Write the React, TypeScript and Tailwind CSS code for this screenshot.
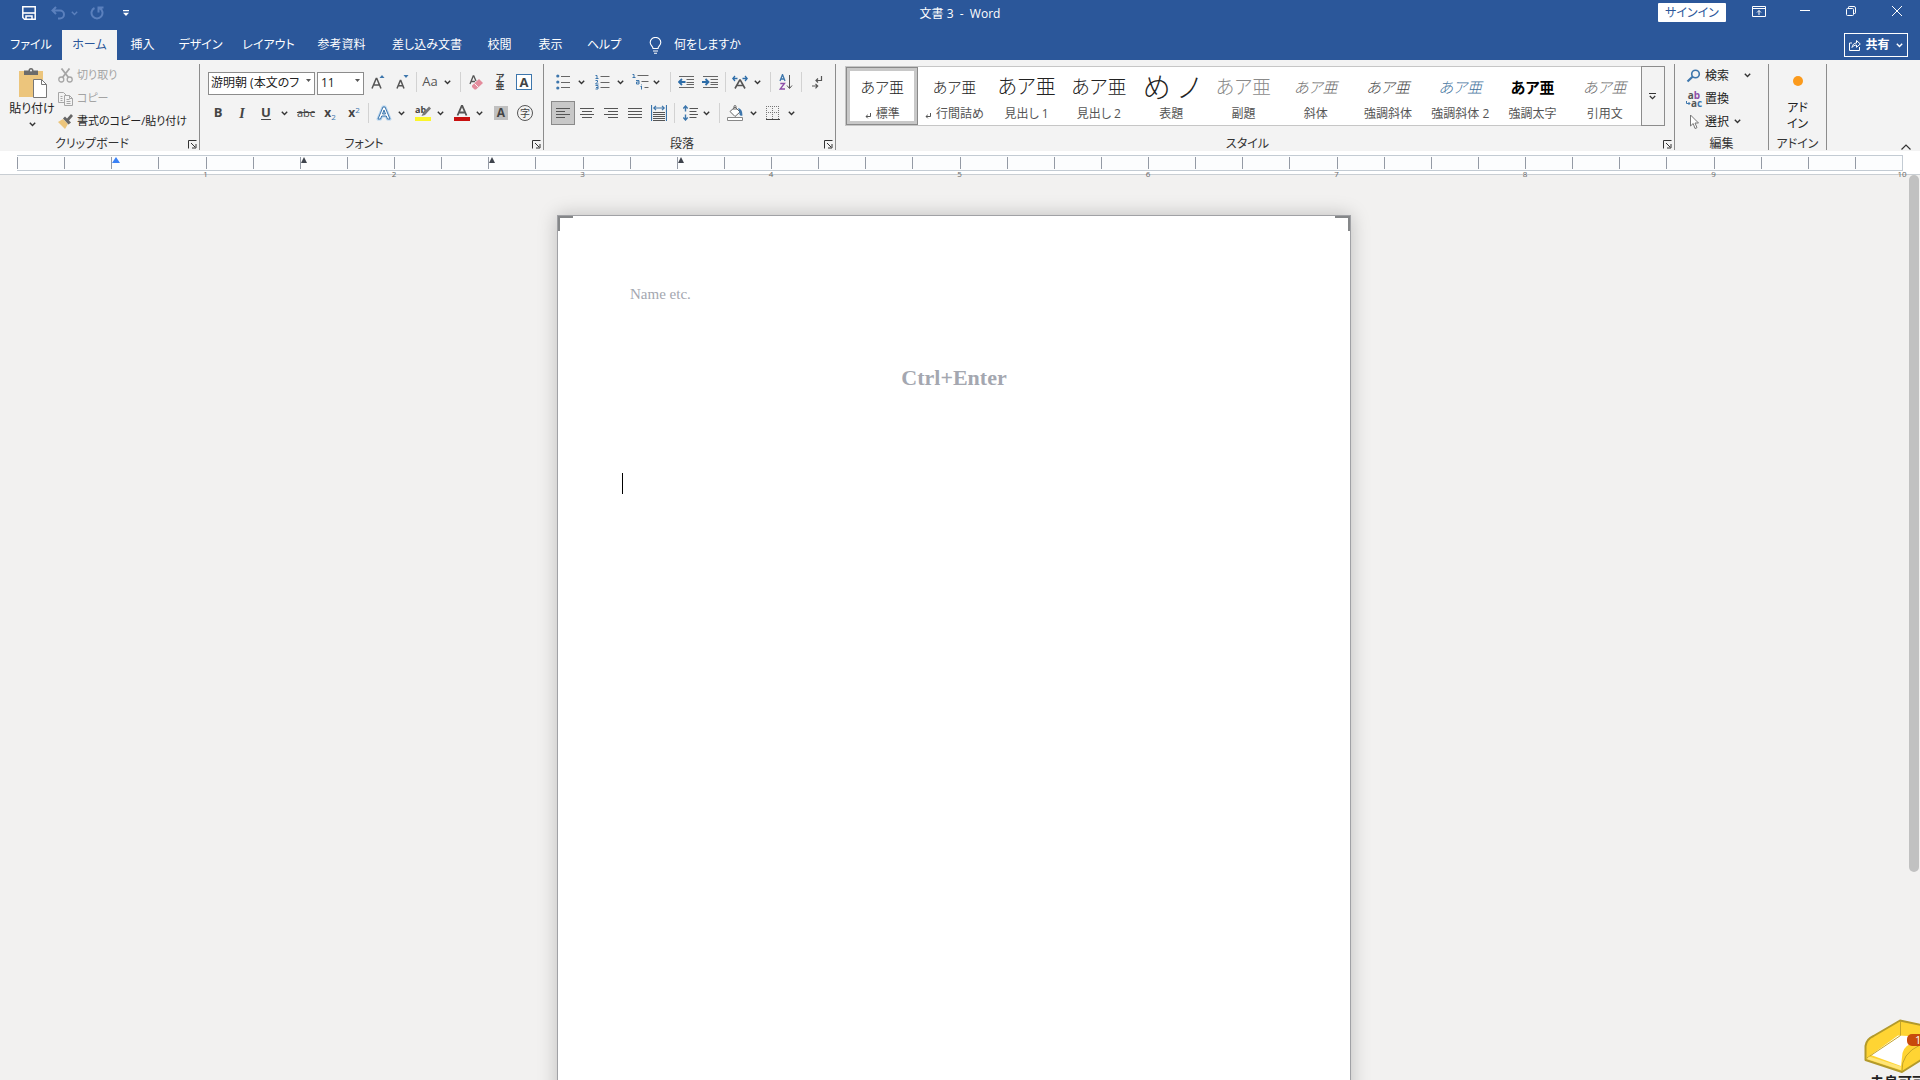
import type { ReactNode } from 'react';
import clsx from 'clsx';

const tabs = [
  { label: 'ファイル', width: 'w-[62px]' },
  { label: 'ホーム', width: 'w-[55px]', active: true },
  { label: '挿入', width: 'w-[51px]' },
  { label: 'デザイン', width: 'w-[65px]' },
  { label: 'レイアウト', width: 'w-[71px]' },
  { label: '参考資料', width: 'w-[75px]' },
  { label: '差し込み文書', width: 'w-[96px]' },
  { label: '校閲', width: 'w-[49px]' },
  { label: '表示', width: 'w-[53px]' },
  { label: 'ヘルプ', width: 'w-[54px]' },
];

const styles = [
  { label: '標準', sample: 'あア亜', look: 'text-[15px] font-light text-[#222]', mark: true, active: true },
  { label: '行間詰め', sample: 'あア亜', look: 'text-[15px] font-light text-[#222]', mark: true },
  { label: '見出し 1', sample: 'あア亜', look: 'text-[20px] font-light text-[#222]' },
  { label: '見出し 2', sample: 'あア亜', look: 'text-[19px] font-light text-[#222]' },
  { label: '表題', sample: 'め ノ', look: 'text-[28px] font-light text-[#222]' },
  { label: '副題', sample: 'あア亜', look: 'text-[19px] font-light text-[#8a8a8a]' },
  { label: '斜体', sample: 'あア亜', look: 'text-[15px] font-light italic text-[#6a6a6a]' },
  { label: '強調斜体', sample: 'あア亜', look: 'text-[15px] font-light italic text-[#444]' },
  { label: '強調斜体 2', sample: 'あア亜', look: 'text-[15px] font-light italic text-[#41719c]' },
  { label: '強調太字', sample: 'あア亜', look: 'text-[15px] font-bold text-black' },
  { label: '引用文', sample: 'あア亜', look: 'text-[15px] font-light italic text-[#6a6a6a]' },
];

function Chevron({ className = 'text-[#333]' }: { className?: string }) {
  return (
    <svg viewBox="0 0 7 5" className={clsx('h-[5px] w-[7px] shrink-0', className)} fill="none" stroke="currentColor" strokeWidth="1.4">
      <path d="M0.8 0.8 3.5 3.5 6.2 0.8" />
    </svg>
  );
}

function Tool({ label, className = 'w-6', active, children }: { label: string; className?: string; active?: boolean; children: ReactNode }) {
  return (
    <button
      aria-label={label}
      className={clsx('flex h-6 shrink-0 items-center justify-center', className, active && 'border border-[#8a8a8a] bg-[#c8c8c8]')}
    >
      {children}
    </button>
  );
}

function Drop({ label }: { label: string }) {
  return (
    <button aria-label={label} className="flex h-6 w-3 shrink-0 items-center justify-center">
      <Chevron />
    </button>
  );
}

function Sep({ className }: { className: string }) {
  return <div className={clsx('h-5 w-px shrink-0 bg-[#d2d2d2]', className)} />;
}

function Group({ label, launcher, className, children }: { label: string; launcher?: boolean; className: string; children: ReactNode }) {
  return (
    <section className={clsx('flex flex-col border-r border-[#8c8c8c]', className)}>
      <div className="h-[74px]">{children}</div>
      <div className="flex h-3 items-center">
        <h2 className="flex-1 text-center text-[12px] leading-3 whitespace-nowrap text-[#333]">{label}</h2>
        {launcher && (
          <button aria-label={`${label}の設定`} className="mr-[2px] ml-1">
            <svg viewBox="0 0 9 9" className="size-[9px]" fill="none" stroke="#333">
              <path d="M0.5 8.5V0.5H8.5M3 3l4 4M8 4v4H4" />
            </svg>
          </button>
        )}
      </div>
    </section>
  );
}

function LineIcon({ rows }: { rows: [number, number][] }) {
  return (
    <svg viewBox="0 0 16 14" className="h-[14px] w-4" stroke="#555">
      {rows.map(([x1, x2], i) => (
        <path key={i} d={`M${x1} ${i * 3 + 2.5}H${x2}`} />
      ))}
    </svg>
  );
}

function ListIcon({ kind }: { kind: 'bullet' | 'number' | 'multi' }) {
  if (kind === 'bullet') {
    return (
      <svg viewBox="0 0 14 16" className="h-4 w-[14px]" fill="#3d76ac">
        <circle cx="1.8" cy="2" r="1.6" />
        <circle cx="1.8" cy="8" r="1.6" />
        <circle cx="1.8" cy="14" r="1.6" />
        <path d="M5 2.5h9M5 8.5h9M5 13.5h9" stroke="#666" />
      </svg>
    );
  }
  if (kind === 'number') {
    return (
      <svg viewBox="0 0 15 16" className="h-4 w-[15px]" fill="none" stroke="#3d76ac">
        <path d="M0.5 1.5h1.5v3M0.5 4.5h3M0.5 6.5h2v1.5l-2 2h3M0.5 11.5h2.5v3.5h-2.5M1 13.5h2" />
        <path d="M5.5 2.5h9M5.5 8.5h9M5.5 13.5h9" stroke="#666" />
      </svg>
    );
  }
  return (
    <svg viewBox="0 0 17 16" className="h-4 w-[17px]" fill="none" stroke="#3d76ac">
      <path d="M0.5 0.5h1.5v3M0.5 3.5h3M4 6.5h3v3.5h-2.5v-2h2.5M9.5 10.5v.8M9.5 12v3.5M8.5 12.5h1" />
      <path d="M5.5 1.5h11M9.5 7.5h7M12.5 13.5h4" stroke="#666" />
    </svg>
  );
}

function IndentIcon({ out }: { out?: boolean }) {
  return (
    <svg viewBox="0 0 16 14" className="h-[14px] w-4" fill="none">
      <path d="M1 1.5h15M8.5 4.5H16M8.5 7.5H16M8.5 9.5H16M1 12.5h15" stroke="#666" />
      {out ? <path d="M7.5 7H1M4 4 1 7l3 3" stroke="#2e6da8" strokeWidth="1.8" /> : <path d="M0 7h6.5M3.5 4l3 3-3 3" stroke="#2e6da8" strokeWidth="1.8" />}
    </svg>
  );
}

function TitleBar() {
  return (
    <header className="grid h-[30px] grid-cols-[1fr_auto_1fr] bg-[#2b579a] text-white">
      <div className="flex h-[26px] items-center pl-[22px]">
        <button aria-label="上書き保存">
          <svg viewBox="0 0 14 14" className="size-[14px]" fill="none" stroke="#fff" strokeWidth="1.5">
            <path d="M0.8 0.8h12.4v12.4H2.5L0.8 11.5z" />
            <path d="M1 7h12" strokeWidth="1.6" />
            <path d="M4 13V10h6v3" />
          </svg>
        </button>
        <button aria-label="元に戻す" className="ml-[15px]">
          <svg viewBox="0 0 14 14" className="size-[14px]" fill="none" stroke="#5b80bd" strokeWidth="2">
            <path d="M5 1 1.500 4.500 5 8M1.500 4.500H9a4 4 0 0 1 0 8H7" />
          </svg>
        </button>
        <button aria-label="元に戻すの履歴" className="ml-[6px]">
          <Chevron className="text-[#5b80bd]" />
        </button>
        <button aria-label="繰り返し" className="ml-[12px]">
          <svg viewBox="0 0 14 14" className="size-[14px]" fill="none" stroke="#5b80bd" strokeWidth="2">
            <path d="M4.500 2A5.500 5.500 0 1 0 9.500 2M8.500 6.500V1.500H13.500" />
          </svg>
        </button>
        <button aria-label="クイック アクセス ツール バーのカスタマイズ" className="ml-[19px]">
          <svg viewBox="0 0 6 6" className="size-[6px]" fill="#fff">
            <path d="M0 0h6v1.300H0zM0 2.700h6L3 6z" />
          </svg>
        </button>
      </div>
      <h1 className="flex h-[28px] items-center text-[12px] whitespace-pre">{'文書 3  -  Word'}</h1>
      <div className="flex h-[22px] justify-end">
        <button className="mt-[3px] mr-[10px] h-[19px] w-[68px] rounded-[1px] bg-white text-[12px] leading-[19px] text-[#2b579a]">サインイン</button>
        <button aria-label="リボンの表示オプション" className="flex w-[46px] items-center justify-center">
          <svg viewBox="0 0 14 11" className="h-[11px] w-[14px]" fill="none" stroke="#fff">
            <path d="M0.500 0.500h13v10H0.500zM0.500 2.500h13M7 9V4.500M5 6.500l2-2 2 2" />
          </svg>
        </button>
        <button aria-label="最小化" className="flex w-[46px] items-center justify-center">
          <svg viewBox="0 0 10 10" className="size-[10px]" stroke="#fff">
            <path d="M0 4.500h10" />
          </svg>
        </button>
        <button aria-label="元のサイズに戻す" className="flex w-[46px] items-center justify-center">
          <svg viewBox="0 0 10 10" className="size-[10px]" fill="none" stroke="#fff">
            <rect x="0.5" y="2.5" width="7" height="7" rx="1" />
            <path d="M2.500 2V1.200q0-.7.700-.7H8q1.500 0 1.500 1.500v4.800q0 .7-.7.700H8" />
          </svg>
        </button>
        <button aria-label="閉じる" className="flex w-[46px] items-center justify-center">
          <svg viewBox="0 0 10 10" className="size-[10px]" stroke="#fff">
            <path d="M0 0l10 10M10 0 0 10" />
          </svg>
        </button>
      </div>
    </header>
  );
}

function TabBar() {
  return (
    <nav className="flex h-[30px] bg-[#2b579a] text-[12px] text-white">
      {tabs.map((tab) => (
        <button
          key={tab.label}
          className={clsx('shrink-0 text-center whitespace-nowrap', tab.width, tab.active && 'bg-[#f3f3f3] text-[#2b579a]')}
        >
          {tab.label}
        </button>
      ))}
      <button className="ml-[18px] flex items-center gap-3 whitespace-nowrap">
        <svg viewBox="0 0 13 17" className="h-[17px] w-[13px]" fill="none" stroke="#fff" strokeWidth="1.1">
          <path d="M4 11.500C4 9 1.200 8.500 1.200 5.500a5.200 5 0 0 1 10.600 0C11.800 8.500 9 9 9 11.500zM4 14h5M5 16.200h3" />
        </svg>
        何をしますか
      </button>
      <button className="mt-[3px] mr-[12px] ml-auto flex h-[24px] w-[64px] items-center justify-center border border-white font-bold">
        <svg viewBox="0 0 12 12" className="mr-1 size-3" fill="none" stroke="#fff">
          <path d="M3 4H0.500v7.500h10V8M3 8.500C3.500 5.500 5 4 7.500 4V1.500L11.300 5 7.500 8.300V6C5.500 6 4 7 3 8.500z" />
        </svg>
        共有
        <Chevron className="ml-[6px] text-white" />
      </button>
    </nav>
  );
}

function ClipboardGroup() {
  return (
    <Group label="クリップボード" launcher className="w-[200px]">
      <div className="flex pl-2">
        <button className="flex w-12 flex-col items-center pt-1 text-[12px] leading-4 text-[#222]">
          <svg viewBox="0 0 28 30" className="ml-[2px] h-[30px] w-7">
            <path d="M0 3h24v26H0z" fill="#ecc57c" />
            <path d="M5 2.500h4.500a2.500 2.500 0 0 1 5 0H19V7H5z" fill="#6b6b6b" />
            <circle cx="12" cy="2.5" r="1" fill="#f3f3f3" />
            <path d="M14.500 11.500h8l5 5v13h-13z" fill="#fff" stroke="#777" />
            <path d="M22.500 11.500v5h5" fill="none" stroke="#777" />
          </svg>
          <span className="mt-[3px] whitespace-nowrap">貼り付け</span>
          <Chevron className="mt-[5px] text-[#333]" />
        </button>
        <div className="flex flex-col pl-[2px] text-[11px] whitespace-nowrap">
          <button disabled className="flex h-[23px] items-center gap-1 text-[#a3a3a3]">
            <svg viewBox="0 0 15 15" className="size-[15px]" fill="none" stroke="#a6a6a6" strokeWidth="1.3">
              <path d="M3.500 0.500 10.500 9.500M11.500 0.500 4.500 9.500" strokeWidth="1.8" />
              <circle cx="3.3" cy="11.5" r="2.5" />
              <circle cx="11.7" cy="11.5" r="2.5" />
            </svg>
            切り取り
          </button>
          <button disabled className="flex h-[23px] items-center gap-1 text-[#a3a3a3]">
            <svg viewBox="0 0 15 15" className="size-[15px]" fill="#f3f3f3" stroke="#a6a6a6">
              <path d="M0.500 1.500h5l3 3v7h-8zM2.500 5.500h2M2.500 7.500h2M2.500 9.500h2" />
              <path d="M6.500 4.500h5l3 3v7h-8zM11.500 4.500v3h3M8.500 8.500h3M8.500 10.500h4M8.500 12.500h4" />
            </svg>
            コピー
          </button>
          <button className="flex h-[23px] items-center gap-1 text-[#222]">
            <svg viewBox="0 0 15 15" className="size-[15px]">
              <path d="M0 8 5 5l5 5-3 5z" fill="#ecc57c" />
              <path d="M5 4.500 7 2.500l2 2L13 0l2 2-4 4.500 2 2-2.500 2z" fill="#666" />
            </svg>
            書式のコピー/貼り付け
          </button>
        </div>
      </div>
    </Group>
  );
}

function FontGroup() {
  return (
    <Group label="フォント" launcher className="w-[344px]">
      <div className="flex h-[36px] items-center pl-2 text-[#555]">
        <div className="relative">
          <select aria-label="フォント" className="h-[23px] w-[107px] appearance-none border border-[#8c8c8c] bg-white pr-[14px] pl-[2px] text-[12px] text-[#222]">
            <option>游明朝 (本文のフォント)</option>
          </select>
          <svg viewBox="0 0 5 3" className="pointer-events-none absolute top-[10px] right-[4px] h-[3px] w-[5px]" fill="#555">
            <path d="M0 0h5L2.500 3z" />
          </svg>
        </div>
        <div className="relative ml-[2px]">
          <select aria-label="フォント サイズ" className="h-[23px] w-[47px] appearance-none border border-[#8c8c8c] bg-white pl-[3px] text-[12px] text-[#222]">
            <option>11</option>
          </select>
          <svg viewBox="0 0 5 3" className="pointer-events-none absolute top-[10px] right-[4px] h-[3px] w-[5px]" fill="#555">
            <path d="M0 0h5L2.500 3z" />
          </svg>
        </div>
        <Tool label="フォント サイズの拡大" className="ml-[2px] w-6">
          <svg viewBox="0 0 14 14" className="size-[14px]" fill="none" stroke="#555" strokeWidth="1.5">
            <path d="M1 13.500 5.200 3.500h.6L10 13.500M2.500 10h6" />
            <path d="M8.500 3 11 0l2.500 3z" fill="#3d76ac" stroke="none" />
          </svg>
        </Tool>
        <Tool label="フォント サイズの縮小">
          <svg viewBox="0 0 14 14" className="size-[14px]" fill="none" stroke="#555" strokeWidth="1.5">
            <path d="M2 13.500 5.300 5.500h.5L9 13.500M3.500 10.800h4.500" />
            <path d="M8.500 0h5L11 3z" fill="#3d76ac" stroke="none" />
          </svg>
        </Tool>
        <Sep className="mx-[2px]" />
        <Tool label="文字種の変換" className="w-[22px] text-[13px]">Aa</Tool>
        <Drop label="文字種の一覧" />
        <Sep className="mr-[3px] ml-[7px]" />
        <Tool label="書式のクリア">
          <svg viewBox="0 0 15 15" className="size-[15px]" fill="none">
            <path d="M1 9 4.200 1h.6L7 6M2 6.500h4" stroke="#555" strokeWidth="1.3" />
            <path d="M3 10.500 10 4l4 4-7 6.500H5.500L3 12z" fill="#e48c9c" />
            <path d="M5.500 8.500 9.500 12.500" stroke="#f3f3f3" />
          </svg>
        </Tool>
        <Tool label="ルビ">
          <span className="flex flex-col items-center text-[9px] leading-[8px] font-bold text-[#444]">
            <span>ア</span>
            <span>亜</span>
          </span>
        </Tool>
        <Tool label="囲み線">
          <span className="flex size-4 items-center justify-center border border-[#3d76ac] bg-white text-[13px] leading-none font-bold text-[#444]">A</span>
        </Tool>
      </div>
      <div className="flex h-[26px] items-center pl-[6px] text-[#444]">
        <Tool label="太字"><b className="text-[13px]">B</b></Tool>
        <Tool label="斜体"><i className="font-['Liberation_Serif',serif] text-[14px] font-bold">I</i></Tool>
        <Tool label="下線"><b className="text-[13px] underline underline-offset-2">U</b></Tool>
        <Drop label="下線の種類" />
        <Tool label="取り消し線" className="ml-1 w-6"><s className="text-[11px]">abc</s></Tool>
        <Tool label="下付き"><b className="text-[12px]">x</b><span className="pt-[7px] text-[8px] text-[#3d76ac]">2</span></Tool>
        <Tool label="上付き"><b className="text-[12px]">x</b><span className="pb-[7px] text-[8px] text-[#3d76ac]">2</span></Tool>
        <Sep className="mr-[4px] ml-[2px]" />
        <Tool label="文字の効果と体裁" className="w-[22px]">
          <svg viewBox="0 0 16 16" className="size-4" fill="none" strokeLinejoin="round">
            <path d="M2 14 7 2h2l5 12h-2.500l-1.200-3H5.700l-1.200 3zM6.500 9h3L8 5z" stroke="#b5d3ee" strokeWidth="3" />
            <path d="M2 14 7 2h2l5 12h-2.500l-1.200-3H5.700l-1.200 3zM6.500 9h3L8 5z" fill="#fff" stroke="#3d76ac" />
          </svg>
        </Tool>
        <Drop label="文字の効果の一覧" />
        <Tool label="蛍光ペンの色" className="ml-[5px] w-[22px]">
          <svg viewBox="0 0 16 16" className="size-4 overflow-visible">
            <text x="0" y="8" fontSize="9" fill="#444" fontWeight="bold">ab</text>
            <path d="M14 1.500 8 8l-1.500 3L10 10l6-6.500z" fill="#777" />
            <path d="M0 12h16v4H0z" fill="#fbf52a" />
          </svg>
        </Tool>
        <Drop label="蛍光ペンの一覧" />
        <Tool label="フォントの色" className="ml-[5px] w-[22px]">
          <svg viewBox="0 0 16 16" className="size-4">
            <path d="M3.500 10.500 7.700 1h.6l4.200 9.500M5 7.500h6" fill="none" stroke="#555" strokeWidth="1.8" />
            <path d="M0 12h16v4H0z" fill="#c8100f" />
          </svg>
        </Tool>
        <Drop label="フォントの色の一覧" />
        <Tool label="文字の網かけ" className="ml-1 w-6">
          <span className="flex size-[14px] items-center justify-center bg-[#c0c0c0] text-[12px] leading-none font-bold">A</span>
        </Tool>
        <Tool label="囲い文字">
          <span className="flex size-4 items-center justify-center rounded-full border border-[#555] text-[10px] leading-none">字</span>
        </Tool>
      </div>
    </Group>
  );
}

function ParagraphGroup() {
  return (
    <Group label="段落" launcher className="w-[292px]">
      <div className="flex h-[36px] items-center pl-[7px]">
        <Tool label="箇条書き"><ListIcon kind="bullet" /></Tool>
        <Drop label="行頭文字ライブラリ" />
        <Tool label="段落番号" className="ml-[3px] w-6"><ListIcon kind="number" /></Tool>
        <Drop label="番号ライブラリ" />
        <Tool label="アウトライン" className="ml-[4px] w-[20px]"><ListIcon kind="multi" /></Tool>
        <Drop label="リスト ライブラリ" />
        <Sep className="mr-[3px] ml-[8px]" />
        <Tool label="インデントを減らす"><IndentIcon out /></Tool>
        <Tool label="インデントを増やす"><IndentIcon /></Tool>
        <Sep className="mx-[3px]" />
        <Tool label="拡張書式" className="w-[22px]">
          <svg viewBox="0 0 16 14" className="h-[14px] w-4" fill="none">
            <path d="M3 13.500 7.700 5h.6l4.700 8.500M5 10.500h6" stroke="#555" strokeWidth="1.6" />
            <path d="M5.500 3.500H1M3 1 .8 3.500 3 6M10.500 3.500H15M13 1l2.200 2.500L13 6" stroke="#2e6da8" strokeWidth="1.3" />
          </svg>
        </Tool>
        <Drop label="拡張書式の一覧" />
        <Sep className="mr-[3px] ml-[7px]" />
        <Tool label="並べ替え">
          <svg viewBox="0 0 14 16" className="h-4 w-[14px]" fill="none">
            <path d="M1 7 3.500 .5 6 7M1.800 5h3.500" stroke="#3d76ac" strokeWidth="1.3" />
            <path d="M1.300 9.500H5.500L1.200 15H6" stroke="#8d4fa8" strokeWidth="1.3" />
            <path d="M10.500 1v13M8 11.500l2.500 3 2.500-3" stroke="#555" />
          </svg>
        </Tool>
        <Sep className="mr-[3px] ml-[3px]" />
        <Tool label="編集記号の表示">
          <svg viewBox="0 0 11 13" className="h-[13px] w-[11px]" fill="none" stroke="#555" strokeWidth="1.2">
            <path d="M9.500 0v4.500H4M6 2.500l-2 2 2 2M0 10h5.500M3.500 7.800 5.700 10l-2.200 2.300" />
          </svg>
        </Tool>
      </div>
      <div className="flex h-[26px] items-center pl-[7px]">
        <Tool label="左揃え" active><LineIcon rows={[[1, 15], [1, 10], [1, 15], [1, 10]]} /></Tool>
        <Tool label="中央揃え"><LineIcon rows={[[1, 15], [3, 13], [1, 15], [3, 13]]} /></Tool>
        <Tool label="右揃え"><LineIcon rows={[[1, 15], [5, 15], [1, 15], [5, 15]]} /></Tool>
        <Tool label="両端揃え"><LineIcon rows={[[1, 15], [1, 15], [1, 15], [1, 15]]} /></Tool>
        <Tool label="均等割り付け">
          <svg viewBox="0 0 16 16" className="size-4" fill="none">
            <path d="M.5 0v16M15.500 0v16M3 3h10M5 .8 2.800 3 5 5.200M11 .8 13.200 3 11 5.200" stroke="#3d76ac" strokeWidth="1.2" />
            <path d="M2 7.500h12M2 9.500h12M2 11.500h12M2 13.500h12M2 15.500h12" stroke="#555" />
          </svg>
        </Tool>
        <Sep className="mr-[5px] ml-[3px]" />
        <Tool label="行と段落の間隔" className="w-[20px]">
          <svg viewBox="0 0 15 16" className="h-4 w-[15px]" fill="none">
            <path d="M2.500 1v5.500M.3 3.500 2.500 1l2.200 2.500M2.500 9.500V15M.3 12.500 2.500 15l2.200-2.500" stroke="#3d76ac" strokeWidth="1.4" />
            <path d="M6.500 3.500H15M6.500 6.500h7M6.500 9.500H15M6.500 12.500h7" stroke="#555" />
          </svg>
        </Tool>
        <Drop label="行間の一覧" />
        <Sep className="mr-[3px] ml-[7px]" />
        <Tool label="塗りつぶし">
          <svg viewBox="0 0 16 16" className="size-4" fill="none">
            <path d="M3 6.500 8 2l5 5-5 4.500zM7 5V1.500a1 1 0 0 1 2 0V5" fill="#fff" stroke="#666" />
            <path d="M11 3q4.500 .5 4.500 7.500-2 1-3-1V7z" fill="#3d76ac" />
            <path d="M.5 12.500h15v3H.5z" fill="#fff" stroke="#888" />
          </svg>
        </Tool>
        <Drop label="塗りつぶしの一覧" />
        <Tool label="罫線" className="ml-[2px] w-6">
          <svg viewBox="0 0 14 14" className="size-[14px]" fill="none" stroke="#777">
            <path d="M0 .5h14M0 6.500h14M.5 0v13M6.500 0v13M12.500 0v13" strokeDasharray="1 1" />
            <path d="M0 13.500h14" stroke="#444" />
          </svg>
        </Tool>
        <Drop label="罫線の一覧" />
      </div>
    </Group>
  );
}

function StylesGroup() {
  return (
    <Group label="スタイル" launcher className="min-w-0 flex-1">
      <div className="px-[9px] pt-[2px]">
        <div className="flex h-[60px] border border-[#c6c6c6] bg-white">
          {styles.map((s) => (
            <button
              key={s.label}
              className={clsx(
                'flex min-w-0 flex-1 flex-col items-center overflow-hidden border',
                s.active ? 'border-[#8a8a8a] shadow-[inset_0_0_0_3px_#c8c8c8]' : 'border-transparent'
              )}
            >
              <span className={clsx('flex h-[38px] items-center leading-none whitespace-pre', s.look)}>{s.sample}</span>
              <span className="flex items-center text-[12px] leading-4 whitespace-nowrap text-[#555]">
                {s.mark && (
                  <svg viewBox="0 0 6 6" className="mt-[3px] mr-[5px] size-[6px]" fill="none" stroke="#555">
                    <path d="M5.500 0v3.500H1M2.800 1.800 1 3.500l1.800 1.800" />
                  </svg>
                )}
                {s.label}
              </span>
            </button>
          ))}
          <button aria-label="その他のスタイル" className="-my-px -mr-px flex w-6 shrink-0 items-center justify-center border border-[#8c8c8c] bg-[#f3f3f3]">
            <svg viewBox="0 0 7 7" className="size-[7px]" fill="none" stroke="#333" strokeWidth="1.2">
              <path d="M0 .5h7M.8 3 3.500 5.700 6.200 3" />
            </svg>
          </button>
        </div>
      </div>
    </Group>
  );
}

function EditGroup() {
  return (
    <Group label="編集" className="w-[94px]">
      <div className="flex flex-col pl-[11px] text-[12px] whitespace-nowrap text-[#222]">
        <button className="flex h-[23px] items-center">
          <svg viewBox="0 0 16 14" className="mr-[3px] h-[14px] w-4" fill="none" stroke="#3d76ac">
            <circle cx="9.5" cy="5" r="3.8" strokeWidth="1.6" />
            <path d="M6.500 7.800 1.500 12.500" strokeWidth="2.2" />
          </svg>
          検索
          <Chevron className="ml-[15px] text-[#333]" />
        </button>
        <button className="flex h-[23px] items-center">
          <span className="relative mr-[3px] flex w-4 flex-col text-[10px] leading-[8px] font-bold text-[#555]" aria-hidden="true">
            <span>a<span className="text-[#8d4fa8]">b</span></span>
            <span className="pl-[5px]">a<span className="text-[#3d76ac]">c</span></span>
            <svg viewBox="0 0 5 6" className="absolute bottom-0 left-0 h-[6px] w-[5px]" fill="none" stroke="#3d76ac">
              <path d="M.5 0v2.500H4M2.500 1 4 2.500 2.500 4" />
            </svg>
          </span>
          置換
        </button>
        <button className="flex h-[23px] items-center">
          <svg viewBox="0 0 16 16" className="mr-[3px] size-4" fill="#fff" stroke="#777">
            <path d="M4.500 1v11l2.700-2.500L9 14.500l2-.8L9 9h3.500z" />
          </svg>
          選択
          <Chevron className="ml-[5px] text-[#333]" />
        </button>
      </div>
    </Group>
  );
}

// quarter-inch ticks, ten inches across
const ticks = Array.from({ length: 40 }, (_, i) => i);
const tabStops = [2, 6, 10, 14];

function Ruler() {
  return (
    <div className="h-[24px] border-b border-[#c9ced3] bg-white px-[17px] pt-1">
      <div className="flex h-4 border-y border-r border-[#c3cbd3] bg-[#fcfdfe]">
        {ticks.map((t) => (
          <div key={t} className="relative mt-px h-3 flex-1 border-l border-[#949aa5]">
            {tabStops.includes(t) && (
              <svg viewBox="0 0 8 6" className={clsx('h-[6px]', t === 2 ? 'w-2 text-[#3b82f6]' : 'w-[6px] text-[#3f444d]')} preserveAspectRatio="none" fill="currentColor">
                <path d="M0 6 4 0l4 6z" />
              </svg>
            )}
            {t % 4 === 3 && <span className="absolute top-[12px] -right-1 flex w-2 justify-center text-[8px] leading-[9px] text-[#666]">{(t + 1) / 4}</span>}
          </div>
        ))}
      </div>
    </div>
  );
}

function TrayWidget() {
  return (
    <aside className="absolute right-0 bottom-0 h-[62px] w-[56px] overflow-hidden">
      <svg viewBox="0 0 56 62" className="h-[62px] w-[56px]">
        <path d="M1.500 28q1-7 8-10L36 2.500l21 4.500v35L38 54 1.500 42z" fill="#ffd433" stroke="#b39a2c" strokeWidth="2" strokeLinejoin="round" />
        <path d="M7 37 34 17.500l10 .5 9 5q-13 4-14.500 12L37 48z" fill="#fff" />
        <path d="M36.500 3v14.500L3 40M38 53q-1-17 18-26" fill="none" stroke="#c4a42a" />
        <path d="M5 38.500 37 48.500v3.500L3 41z" fill="#ffe57a" />
        <rect x="43" y="16" width="26" height="12" rx="5" fill="#c84a0c" />
        <text x="51" y="26" fontSize="11" fill="#fff">1</text>
      </svg>
      <span className="absolute top-[56px] left-[6px] text-[14px] leading-4 font-bold whitespace-nowrap text-[#222]">未良可可</span>
    </aside>
  );
}

export default function App() {
  return (
    <div className="relative flex h-screen flex-col overflow-hidden bg-[#f2f1f0] font-['Open_Sans','Noto_Sans_CJK_JP',sans-serif] [font-feature-settings:'palt']">
      <TitleBar />
      <TabBar />
      <div className="flex h-[91px] shrink-0 bg-[#f3f3f3] pt-1 pb-px">
        <ClipboardGroup />
        <FontGroup />
        <ParagraphGroup />
        <StylesGroup />
        <EditGroup />
        <Group label="アドイン" className="w-[58px]">
          <button className="flex w-full flex-col items-center pt-[12px] text-[12px] leading-4 text-[#222]">
            <span className="mb-[14px] size-[10px] rounded-full bg-[#fb9a1c]" />
            <span>アド</span>
            <span>イン</span>
          </button>
        </Group>
        <div className="flex w-[93px] items-end justify-end pr-[9px]">
          <button aria-label="リボンを折りたたむ">
            <svg viewBox="0 0 10 6" className="h-[6px] w-[10px]" fill="none" stroke="#333" strokeWidth="1.2">
              <path d="M.5 5.500 5 1l4.500 4.500" />
            </svg>
          </button>
        </div>
      </div>
      <Ruler />
      <main className="flex min-h-0 flex-1">
        <div className="flex min-w-0 flex-1 justify-center overflow-hidden pt-[40px]">
          <article className="h-[1123px] w-[794px] shrink-0 border border-[#a0a1a5] bg-white font-['Liberation_Serif',serif] text-[#a4a7b0] shadow-[0_0_18px_rgba(0,0,0,0.22)]">
            <div className="flex justify-between">
              <span className="size-[15px] border-t-2 border-l-2 border-[#858789]" />
              <span className="size-[15px] border-t-2 border-r-2 border-[#858789]" />
            </div>
            <div className="px-[64px]">
              <p className="mt-[53px] pl-2 text-[15px] leading-5">Name etc.</p>
              <p className="mt-[60px] text-center text-[22px] leading-7 font-bold">Ctrl+Enter</p>
              <div className="mt-[81px] h-[21px] w-px bg-black" />
            </div>
          </article>
        </div>
        <div className="w-[12px] shrink-0 px-px">
          <div className="h-[77%] rounded-full bg-[#c1c1c1]" />
        </div>
      </main>
      <TrayWidget />
    </div>
  );
}
